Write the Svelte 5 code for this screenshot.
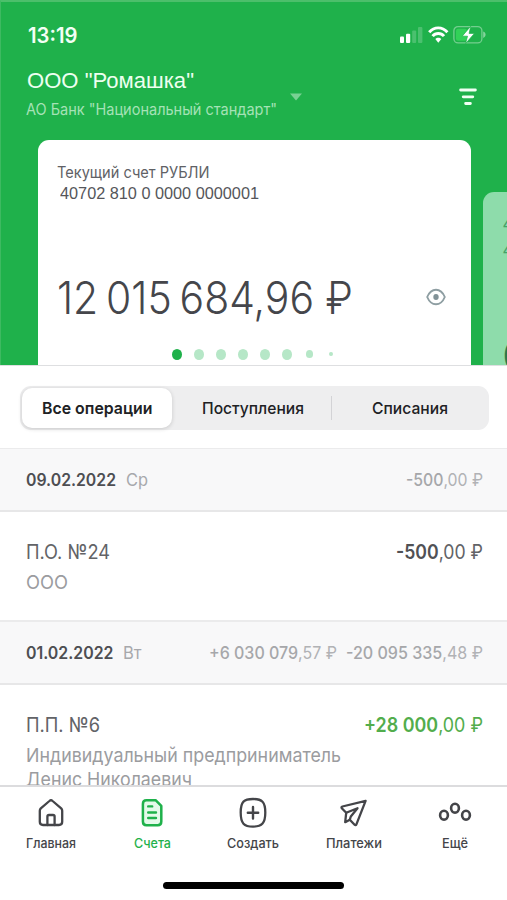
<script>
  const segments = [
    { label: "Все операции", width: 110.5, active: true },
    { label: "Поступления", width: 102 },
    { label: "Списания", width: 76 }
  ];

  // sums are split: the integer part is drawn bolder than the kopecks
  const days = [
    {
      date: "09.02.2022",
      dateWidth: 90,
      weekday: "Ср",
      dayWidth: 22,
      totals: [{ whole: "-500", rest: ",00 ₽", width: 77 }],
      items: [
        {
          title: "П.О. №24",
          titleWidth: 84,
          lines: [{ text: "ООО", width: 42 }],
          whole: "-500",
          rest: ",00 ₽",
          width: 87
        }
      ]
    },
    {
      date: "01.02.2022",
      dateWidth: 87.5,
      weekday: "Вт",
      dayWidth: 18.5,
      totals: [
        { whole: "+6 030 079", rest: ",57 ₽", width: 128 },
        { whole: "-20 095 335", rest: ",48 ₽", width: 137 }
      ],
      items: [
        {
          title: "П.П. №6",
          titleWidth: 74,
          lines: [
            { text: "Индивидуальный предприниматель", width: 315 },
            { text: "Денис Николаевич", width: 166 }
          ],
          whole: "+28 000",
          rest: ",00 ₽",
          width: 119,
          income: true
        }
      ]
    }
  ];

  const tabs = [
    { id: "home", label: "Главная", width: 50 },
    { id: "accounts", label: "Счета", width: 37 },
    { id: "create", label: "Создать", width: 52 },
    { id: "payments", label: "Платежи", width: 56 },
    { id: "more", label: "Ещё", width: 26 }
  ];

  const dots = [10, 10, 10, 10, 10, 10, 7, 4];

  // condense a line of text to the given width
  function fit(node, width) {
    const natural = node.getBoundingClientRect().width;
    node.style.transform = `scaleX(${width / natural})`;
    node.style.marginRight = `${width - natural}px`;
  }
</script>

<div class="app">
  <header>
    <div class="status">
      <span class="fit time" use:fit={49.5}>13:19</span>
      <svg width="88" height="20" viewBox="0 0 88 20">
        <g fill="#fff">
          <rect x="1" y="11.5" width="4" height="6.5" rx="1" />
          <rect x="7" y="8.8" width="4.2" height="9.2" rx="1" />
          <rect x="13.2" y="5.5" width="4" height="12.5" rx="1" opacity=".2" />
          <rect x="19" y="2" width="4.4" height="16" rx="1" opacity=".2" />
        </g>
        <g fill="none" stroke="#fff" stroke-width="2.9">
          <path d="M30.2 7.3C35.2 1.4 43.2 1.4 48.4 7.3" />
          <path d="M33.6 11.2C36.6 7.5 42 7.5 45 11.2" />
        </g>
        <path d="M36.3 14.1C38 12.2 40.6 12.2 42.3 14.1L39.3 17.7Z" fill="#fff" />
        <rect x="54.9" y="1.6" width="28" height="16.3" rx="4.2" fill="none" stroke="#fff" stroke-opacity=".38" stroke-width="1.3" />
        <rect x="57" y="3.8" width="11" height="12" rx="2" fill="#32d158" />
        <path d="M84.2 6.6C87.4 8 87.4 11.4 84.2 12.9Z" fill="#fff" opacity=".45" />
        <path d="M71.7 1.2L63.2 11.2H68.5L66.6 18.6L75.4 8.4H70.1Z" fill="#fff" stroke="#1fb14b" stroke-width=".7" />
      </svg>
    </div>

    <div class="company">
      <div class="names">
        <span class="fit name" use:fit={167}>ООО "Ромашка"</span>
        <span class="fit bank" use:fit={251}>АО Банк "Национальный стандарт"</span>
      </div>
      <svg class="caret" width="12" height="8" viewBox="0 0 12 8"><path d="M0 .5H12L6 7.5Z" fill="#79d193" /></svg>
      <svg class="filter" width="18" height="18" viewBox="0 0 18 18">
        <g stroke="#f0fff3" stroke-width="2.8" stroke-linecap="round">
          <path d="M1.6 2H16.4M4.2 8.8H13.8M6.6 15.5H11.4" />
        </g>
      </svg>
    </div>

    <div class="cards">
      <div class="card">
        <span class="fit kind" use:fit={152.5}>Текущий счет РУБЛИ</span>
        <span class="fit number" use:fit={199}>40702 810 0 0000 0000001</span>
        <div class="balance">
          <span class="fit sum" use:fit={296}>12 015 684,96 <span class="currency">₽</span></span>
          <svg width="20" height="18" viewBox="0 0 20 18">
            <path d="M1.2 9C3.2 4.2 6.1 1.7 10 1.7S16.8 4.2 18.8 9C16.8 13.8 13.9 16.3 10 16.3S3.2 13.8 1.2 9Z" fill="none" stroke="#8e9ea2" stroke-width="1.9" />
            <ellipse cx="10" cy="9" rx="2.7" ry="3" fill="#819297" />
          </svg>
        </div>
        <div class="dots">
          {#each dots as size, i}
            <span class="slot">
              <span class="dot" class:current={i === 0} style="width: {size}px; height: {size * 1.1}px"></span>
            </span>
          {/each}
        </div>
      </div>
      <div class="card next">
        <span>4</span>
        <span>4</span>
        <b>0</b>
      </div>
    </div>
  </header>

  <div class="filterbar">
    <div class="segmented">
      {#each segments as s}
        <div class="segment" class:active={s.active}>
          <span class="fit" use:fit={s.width}>{s.label}</span>
        </div>
      {/each}
    </div>
  </div>

  <main>
    {#each days as day}
      <div class="day">
        <span class="fit date" use:fit={day.dateWidth}>{day.date}</span>
        <span class="fit weekday" use:fit={day.dayWidth}>{day.weekday}</span>
        <div class="totals">
          {#each day.totals as t}
            <span class="fit" use:fit={t.width}><b>{t.whole}</b>{t.rest}</span>
          {/each}
        </div>
      </div>
      {#each day.items as item}
        <div class="item">
          <div class="row">
            <span class="fit" use:fit={item.titleWidth}>{item.title}</span>
            <span class="fit amount" class:income={item.income} use:fit={item.width}><b>{item.whole}</b>{item.rest}</span>
          </div>
          <div class="lines">
            {#each item.lines as line}
              <div><span class="fit" use:fit={line.width}>{line.text}</span></div>
            {/each}
          </div>
        </div>
      {/each}
    {/each}
  </main>

  <nav>
    <div class="tabs">
      {#each tabs as tab}
        <div class="tab" class:selected={tab.id === "accounts"}>
          <svg width="34" height="32" viewBox="0 0 34 32" fill="none" stroke="currentColor" stroke-width="2.3" stroke-linejoin="round" stroke-linecap="round">
            {#if tab.id === "home"}
              <path d="M5.8 13.8C5.8 12.8 6.1 12.1 6.8 11.4L15.4 4C16.4 3.1 17.6 3.1 18.6 4L27.2 11.4C27.9 12.1 28.2 12.8 28.2 13.8V24.8C28.2 27 27.2 28 25 28H9C6.8 28 5.8 27 5.8 24.8Z" />
              <path d="M13.4 28V19.6C13.4 18.5 13.9 18 15 18H19C20.1 18 20.6 18.5 20.6 19.6V28" />
            {:else if tab.id === "accounts"}
              <path d="M11.4 3.2H20.6L26.3 8.8V24.5C26.3 27 25.2 28.2 22.8 28.2H11.4C9 28.2 7.9 27 7.9 24.5V6.9C7.9 4.4 9 3.2 11.4 3.2Z" fill="#e4faea" stroke-width="2.5" />
              <path d="M13.2 9.4H17.2M13.2 15.5H21M13.2 21H21" stroke-width="2.4" />
            {:else if tab.id === "create"}
              <path d="M17 2C26 2 29.3 4.8 29.3 15.5S26 29.6 17 29.6S4.7 26.5 4.7 15.5S8 2 17 2Z" />
              <path d="M17 10V21.6M11.8 15.8H22.2" stroke-width="2.4" />
            {:else if tab.id === "payments"}
              <path d="M28.6 3.8L5.4 9.5C4.5 9.8 4.2 10.6 4.8 11.2L9.2 15.8L8.2 25.2L12.8 22.7L17.6 27.8C18.3 28.5 19.1 28.3 19.4 27.3Z" />
              <path d="M9.2 15.8L20.5 11.2L13.8 19.5L12.8 22.7" />
            {:else}
              <g stroke-width="2.6">
                <ellipse cx="6" cy="18.2" rx="3.9" ry="4.4" />
                <ellipse cx="17" cy="11.2" rx="3.9" ry="4.4" />
                <ellipse cx="28" cy="18.2" rx="3.9" ry="4.4" />
              </g>
            {/if}
          </svg>
          <span class="fit" use:fit={tab.width}>{tab.label}</span>
        </div>
      {/each}
    </div>
    <div class="indicator"></div>
  </nav>
</div>

<style>
  :global(body) {
    margin: 0;
  }
  .app {
    width: 507px;
    height: 900px;
    overflow: hidden;
    display: flex;
    flex-direction: column;
    background: #fff;
    color: #4d4e52;
    font-family: Inter, Roboto, sans-serif;
  }
  .app * {
    box-sizing: border-box;
  }
  .fit {
    display: inline-block;
    flex: none;
    white-space: nowrap;
    transform-origin: left center;
  }

  header {
    height: 365px;
    flex: none;
    display: flex;
    flex-direction: column;
    overflow: hidden;
    background: #1fb14b;
    border-top: 2px solid #4cbf6b;
    border-left: 1px solid #3dba61;
  }
  .status {
    height: 63px;
    padding: 5px 20px 2px 27px;
    display: flex;
    flex: none;
    justify-content: space-between;
    align-items: center;
  }
  .time {
    font-size: 21px;
    font-weight: 600;
    color: #f2fff5;
  }
  .company {
    height: 75px;
    flex: none;
    display: flex;
    align-items: flex-start;
    padding: 0 30px 0 25px;
  }
  .names {
    display: flex;
    flex-direction: column;
    align-items: flex-start;
  }
  .name {
    height: 31px;
    line-height: 32px;
    margin-left: 1px;
    font-family: "Liberation Sans", sans-serif;
    font-size: 22.5px;
    color: #edfff0;
  }
  .bank {
    height: 28px;
    line-height: 28px;
    font-size: 15.5px;
    color: #a5e2b6;
  }
  .caret {
    margin: 28px 0 0 12.5px;
  }
  .filter {
    margin: 23px 0 0 auto;
  }

  .cards {
    height: 225px;
    flex: none;
    display: flex;
    gap: 12px;
    padding-left: 36.5px;
    align-items: flex-end;
  }
  .card {
    width: 433px;
    height: 225px;
    flex: none;
    display: flex;
    flex-direction: column;
    align-items: flex-start;
    padding: 22px 20px 0 19.5px;
    background: #fff;
    border-radius: 11px 11px 0 0;
  }
  .kind {
    height: 21px;
    line-height: 21px;
    font-size: 16px;
    color: #606165;
  }
  .number {
    height: 21px;
    line-height: 22px;
    margin-left: 2.5px;
    font-family: "Liberation Sans", sans-serif;
    font-size: 16px;
    color: #55565a;
  }
  .balance {
    align-self: stretch;
    height: 60px;
    margin-top: 63px;
    padding-right: 5px;
    display: flex;
    flex: none;
    align-items: center;
    justify-content: space-between;
  }
  .sum {
    font-size: 45px;
    font-weight: 300;
    word-spacing: -4px;
    color: #45464b;
  }
  .currency {
    margin-left: 4px;
  }
  .dots {
    display: flex;
    flex: none;
    align-items: center;
    height: 54px;
    margin-left: 109px;
  }
  .slot {
    width: 22px;
    height: 12px;
    flex: none;
    display: flex;
    align-items: center;
    justify-content: center;
  }
  .dot {
    border-radius: 50%;
    background: #b6e7c7;
  }
  .dot.current {
    background: #1fb14b;
  }
  .card.next {
    height: 173px;
    padding: 19px 0 0 20px;
    background: #8edcab;
    color: #45a268;
    font-size: 16px;
    line-height: 26px;
  }
  .card.next b {
    margin-top: 68px;
    font-size: 39px;
    font-weight: 400;
    color: #2c774a;
    line-height: 50px;
  }

  .filterbar {
    height: 83px;
    flex: none;
    padding: 20px 18px 0 20px;
    border-top: 1px solid #dedfe1;
  }
  .segmented {
    height: 44px;
    padding: 2px;
    display: flex;
    background: #eeeeef;
    border-radius: 11px;
    color: #202124;
    font-size: 16.5px;
    font-weight: 500;
  }
  .segment {
    position: relative;
    width: 161px;
    flex: none;
    display: flex;
    align-items: center;
    justify-content: center;
  }
  .segment.active {
    width: 150px;
    background: #fff;
    border-radius: 10px;
    box-shadow: 0 1px 4px rgba(0, 0, 0, 0.16);
    font-weight: 600;
  }
  .segment:last-child {
    width: 154px;
  }
  .segment:last-child::before {
    content: "";
    position: absolute;
    left: -2px;
    top: 8px;
    width: 1px;
    height: 24px;
    background: #d3d3d6;
  }

  main {
    height: 337px;
    flex: none;
    overflow: hidden;
  }
  .day {
    height: 65px;
    display: flex;
    align-items: center;
    padding: 0 24.5px 0 25.5px;
    background: #f8f8f9;
    border-top: 2px solid #ebebec;
    border-bottom: 2px solid #e7e7e8;
    font-size: 17px;
    margin-top: -1px;
  }
  .date {
    font-weight: 600;
  }
  .weekday {
    margin-left: 10px;
    color: #a7a8ac;
  }
  .totals {
    margin-left: auto;
    display: flex;
    gap: 9px;
    color: #b1b2b5;
  }
  .totals b {
    font-weight: 500;
    color: #a6a7aa;
  }
  .item {
    height: 109px;
    padding: 24px 24.5px 0 25.5px;
  }
  .row {
    height: 31px;
    display: flex;
    justify-content: space-between;
    align-items: center;
    font-size: 20px;
    color: #626367;
  }
  .row b {
    font-weight: 600;
    color: #505155;
  }
  .row .income,
  .row .income b {
    color: #52ad4c;
  }
  .lines {
    padding-top: 4px;
    font-size: 19px;
    line-height: 24px;
    color: #9b9c9f;
  }
  .lines div {
    height: 23.5px;
  }

  nav {
    height: 115px;
    flex: none;
    border-top: 2px solid #dcdcde;
    background: #fff;
  }
  .tabs {
    height: 95px;
    display: flex;
    padding-left: 0.5px;
  }
  .tab {
    width: 101px;
    display: flex;
    flex-direction: column;
    align-items: center;
    padding-top: 10px;
    font-size: 13px;
    line-height: 20px;
    font-weight: 500;
    color: #444549;
  }
  .tab span {
    margin-top: 4px;
  }
  .tab.selected {
    color: #1fb14b;
  }
  .indicator {
    width: 181px;
    height: 7px;
    margin: 0 auto;
    border-radius: 4px;
    background: #000;
  }
</style>
